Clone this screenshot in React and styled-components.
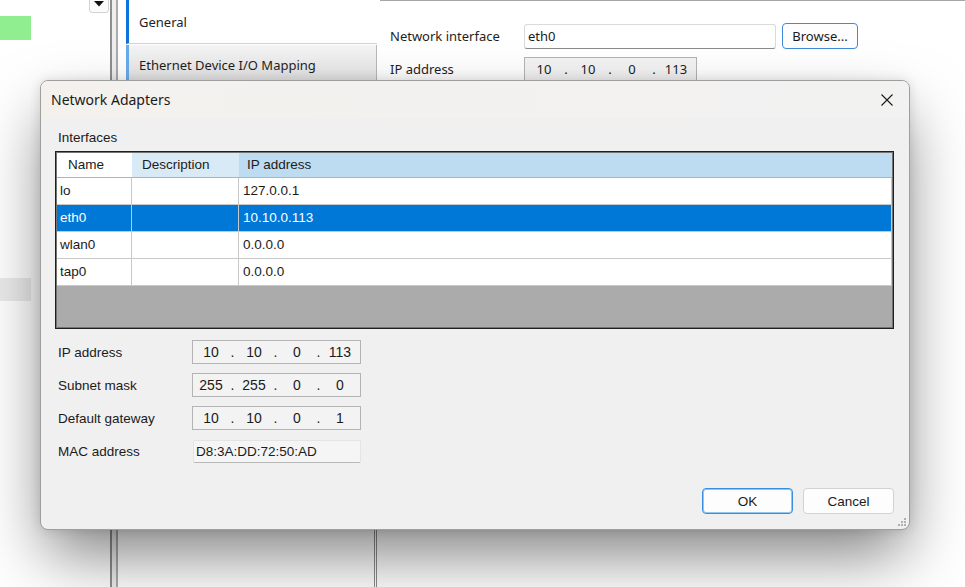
import React from "react";
import styled, { createGlobalStyle } from "styled-components";

const GlobalStyle = createGlobalStyle`
  html, body { margin: 0; padding: 0; background: #fff; }
  body { width: 965px; height: 587px; overflow: hidden; }
  *, *::before, *::after { box-sizing: border-box; }
`;

const WIN = `"Liberation Sans", Arial, sans-serif`;
const UI = `"Noto Sans", "Open Sans", sans-serif`;

const Screen = styled.div`
  position: relative;
  width: 965px;
  height: 587px;
  display: flex;
  background: #fff;
  overflow: hidden;
  font-family: ${UI};
  color: #1b1b1b;
`;

/* ---------- background app ---------- */
const LeftPane = styled.div`
  width: 110px;
  display: flex;
  flex-direction: column;
  background: #fff;
`;

const DropRow = styled.div`
  display: flex;
  justify-content: flex-end;
  height: 13px;
  padding-right: 1px;
`;

const DropButton = styled.div`
  width: 20px;
  height: 16px;
  margin-top: -3px;
  border: 1px solid #d2d2d2;
  border-radius: 3px;
  background: #fbfbfb;
  display: flex;
  justify-content: center;
  padding-top: 3px;
`;

const ColorBlock = styled.div`
  width: 31px;
  height: ${(p) => p.$h}px;
  margin-top: ${(p) => p.$mt}px;
  background: ${(p) => p.$bg};
`;

const Splitter = styled.div`
  width: 8px;
  border-left: 2px solid #8e8e8e;
  border-right: 2px solid #aaaaaa;
  background: #eeeeee;
`;

const TabColumn = styled.div`
  width: 259px;
  display: flex;
  flex-direction: column;
  padding-left: 8px;
  background: #fff;
`;

const Tab = styled.div`
  height: ${(p) => (p.$active ? 44 : 40)}px;
  margin-top: ${(p) => (p.$active ? 0 : 1)}px;
  display: flex;
  align-items: center;
  padding-left: 10px;
  font-size: 13px;
  color: #1e1e1e;
  border-left: 3px solid ${(p) => (p.$active ? "#0a74da" : "#68aceb")};
  background: ${(p) =>
    p.$active ? "#fff" : "linear-gradient(#f4f4f4, #e2e2e2)"};
  border-bottom: ${(p) => (p.$active ? "1px solid #d4d4d4" : "none")};
  border-right: ${(p) => (p.$active ? "none" : "1px solid #b8b8b8")};
`;

const TabFiller = styled.div`
  flex: 1;
  border-right: 3px double #8c8c8c;
`;

const RightPanel = styled.div`
  flex: 1;
  margin-left: 3px;
  border-top: 1px solid #a6a6a6;
  padding: 22px 0 0 10px;
  display: flex;
  flex-direction: column;
  gap: 7px;
`;

const FormRow = styled.div`
  display: flex;
  align-items: center;
  height: 26px;
`;

const FormLabel = styled.div`
  width: 134px;
  font-size: 13px;
  color: #1e1e1e;
`;

const TextInput = styled.div`
  width: 252px;
  height: 25px;
  display: flex;
  align-items: center;
  padding-left: 3px;
  font-size: 13px;
  background: #fff;
  border: 1px solid #dadada;
  border-bottom-color: #8a8a8a;
  border-radius: 3px;
`;

const BrowseButton = styled.div`
  width: 76px;
  height: 26px;
  margin-left: 6px;
  display: flex;
  align-items: center;
  justify-content: center;
  font-size: 13px;
  background: #fdfdfd;
  border: 1px solid #3e8ad8;
  border-radius: 4px;
`;

const IpBox = styled.div`
  width: ${(p) => p.$w}px;
  height: ${(p) => p.$h}px;
  display: flex;
  align-items: center;
  padding-left: ${(p) => p.$pad}px;
  border: 1px solid #b4b4b4;
  background: #f3f3f3;
  font-family: ${(p) => (p.$win ? WIN : UI)};
  font-size: ${(p) => (p.$win ? "14px" : "13px")};
  color: #1b1b1b;
`;

const IpPart = styled.span`
  width: 36px;
  text-align: center;
`;

const IpDot = styled.span`
  width: ${(p) => p.$w}px;
  text-align: center;
`;

/* ---------- dialog ---------- */
const Dialog = styled.section`
  position: absolute;
  left: 40px;
  top: 80px;
  width: 870px;
  height: 450px;
  display: flex;
  flex-direction: column;
  border: 1px solid #9e9e9e;
  border-radius: 8px;
  overflow: hidden;
  background: #f0f0f0;
  box-shadow: 0 30px 64px -6px rgba(0, 0, 0, 0.5),
    0 0 12px rgba(0, 0, 0, 0.12);
`;

const TitleBar = styled.header`
  height: 37px;
  display: flex;
  align-items: center;
  justify-content: space-between;
  padding: 0 16px 0 10px;
  background: linear-gradient(90deg, #f4f1ed, #f2f2f2);
`;

const Title = styled.div`
  font-family: ${UI};
  font-size: 14px;
  color: #1a1a1a;
`;

const Body = styled.div`
  flex: 1;
  display: flex;
  flex-direction: column;
  padding: 12px 15px 15px 14px;
  font-family: ${WIN};
  font-size: 13.5px;
  color: #1b1b1b;
`;

const SectionLabel = styled.div`
  line-height: 16px;
  padding-left: 3px;
  margin-bottom: 5px;
`;

const Table = styled.div`
  height: 178px;
  display: flex;
  flex-direction: column;
  border: 1px solid #1f1f1f;
  padding: 1px;
  background: #747474;
`;

const HeaderRow = styled.div`
  display: grid;
  grid-template-columns: 75px 107px 1fr;
  height: 25px;
  border-bottom: 1px solid #a9b4be;
`;

const HeaderCell = styled.div`
  background: ${(p) => p.$bg};
  padding-left: ${(p) => p.$pad}px;
  line-height: 24px;
`;

const Row = styled.div`
  display: grid;
  grid-template-columns: 75px 107px 1fr;
  height: 27px;
  background: ${(p) => (p.$selected ? "#0078d7" : "#fff")};
  color: ${(p) => (p.$selected ? "#fff" : "#1b1b1b")};
`;

const Cell = styled.div`
  border-right: 1px solid #c8c8c8;
  border-bottom: 1px solid #c8c8c8;
  padding-left: ${(p) => p.$pad}px;
  line-height: 26px;
`;

const EmptyArea = styled.div`
  flex: 1;
  background: #ababab;
`;

const Fields = styled.div`
  margin-top: 11px;
  display: flex;
  flex-direction: column;
  gap: 9px;
`;

const FieldRow = styled.div`
  display: flex;
  align-items: center;
  height: 24px;
`;

const FieldLabel = styled.div`
  width: 137px;
  padding-left: 3px;
`;

const MacBox = styled.div`
  width: 168px;
  height: 23px;
  margin-left: 1px;
  display: flex;
  align-items: center;
  padding-left: 2px;
  background: #f5f5f5;
  border: 1px solid #e4e4e4;
  border-bottom-color: #b9b9b9;
  border-radius: 2px;
`;

const ButtonRow = styled.div`
  margin-top: auto;
  display: flex;
  justify-content: flex-end;
  gap: 10px;
`;

const DialogButton = styled.div`
  width: 91px;
  height: 26px;
  display: flex;
  align-items: center;
  justify-content: center;
  background: #fdfdfd;
  border-radius: 4px;
  border: 1px solid ${(p) => (p.$primary ? "#3a8ee0" : "#d2d2d2")};
  box-shadow: ${(p) => (p.$primary ? "inset 0 0 0 1px #93c3ef" : "none")};
`;

const Grip = styled.svg`
  position: absolute;
  right: 2px;
  bottom: 2px;
`;

const IpField = ({ parts, w, h, pad, win, dot }) => (
  <IpBox $w={w} $h={h} $pad={pad} $win={win}>
    {parts.map((p, i) => (
      <React.Fragment key={i}>
        {i > 0 && <IpDot $w={dot}>.</IpDot>}
        <IpPart>{p}</IpPart>
      </React.Fragment>
    ))}
  </IpBox>
);

const rows = [
  { name: "lo", ip: "127.0.0.1" },
  { name: "eth0", ip: "10.10.0.113", selected: true },
  { name: "wlan0", ip: "0.0.0.0" },
  { name: "tap0", ip: "0.0.0.0" },
];

export default function App() {
  return (
    <>
      <GlobalStyle />
      <Screen>
        <LeftPane>
          <DropRow>
            <DropButton>
              <svg width="10" height="6" viewBox="0 0 10 6">
                <polygon points="0,0 10,0 5,5.5" fill="#111" />
              </svg>
            </DropButton>
          </DropRow>
          <ColorBlock $mt={3} $h={24} $bg="#90ee90" />
          <ColorBlock $mt={238} $h={23} $bg="#ebebeb" />
        </LeftPane>
        <Splitter />
        <TabColumn>
          <Tab $active>General</Tab>
          <Tab>Ethernet Device I/O Mapping</Tab>
          <TabFiller />
        </TabColumn>
        <RightPanel>
          <FormRow>
            <FormLabel>Network interface</FormLabel>
            <TextInput>eth0</TextInput>
            <BrowseButton>Browse...</BrowseButton>
          </FormRow>
          <FormRow>
            <FormLabel>IP address</FormLabel>
            <IpField parts={["10", "10", "0", "113"]} w={173} h={25} pad={1} dot={8} />
          </FormRow>
        </RightPanel>

        <Dialog>
          <TitleBar>
            <Title>Network Adapters</Title>
            <svg width="12" height="12" viewBox="0 0 12 12">
              <path d="M0.5 0.5 L11.5 11.5 M11.5 0.5 L0.5 11.5" stroke="#1a1a1a" strokeWidth="1.1" />
            </svg>
          </TitleBar>
          <Body>
            <SectionLabel>Interfaces</SectionLabel>
            <Table>
              <HeaderRow>
                <HeaderCell $bg="#ffffff" $pad={11}>Name</HeaderCell>
                <HeaderCell $bg="#d9eaf7" $pad={10}>Description</HeaderCell>
                <HeaderCell $bg="#bddcf2" $pad={8}>IP address</HeaderCell>
              </HeaderRow>
              {rows.map((r) => (
                <Row key={r.name} $selected={r.selected}>
                  <Cell $pad={3}>{r.name}</Cell>
                  <Cell $pad={3} />
                  <Cell $pad={4}>{r.ip}</Cell>
                </Row>
              ))}
              <EmptyArea />
            </Table>
            <Fields>
              <FieldRow>
                <FieldLabel>IP address</FieldLabel>
                <IpField parts={["10", "10", "0", "113"]} w={169} h={24} pad={0} dot={7} win />
              </FieldRow>
              <FieldRow>
                <FieldLabel>Subnet mask</FieldLabel>
                <IpField parts={["255", "255", "0", "0"]} w={169} h={24} pad={0} dot={7} win />
              </FieldRow>
              <FieldRow>
                <FieldLabel>Default gateway</FieldLabel>
                <IpField parts={["10", "10", "0", "1"]} w={169} h={24} pad={0} dot={7} win />
              </FieldRow>
              <FieldRow>
                <FieldLabel>MAC address</FieldLabel>
                <MacBox>D8:3A:DD:72:50:AD</MacBox>
              </FieldRow>
            </Fields>
            <ButtonRow>
              <DialogButton $primary>OK</DialogButton>
              <DialogButton>Cancel</DialogButton>
            </ButtonRow>
          </Body>
          <Grip width="10" height="10" viewBox="0 0 10 10">
            <rect x="7" y="1" width="2" height="2" fill="#b0b0b0" />
            <rect x="4" y="4" width="2" height="2" fill="#b0b0b0" />
            <rect x="7" y="4" width="2" height="2" fill="#b0b0b0" />
            <rect x="1" y="7" width="2" height="2" fill="#b0b0b0" />
            <rect x="4" y="7" width="2" height="2" fill="#b0b0b0" />
            <rect x="7" y="7" width="2" height="2" fill="#b0b0b0" />
          </Grip>
        </Dialog>
      </Screen>
    </>
  );
}
